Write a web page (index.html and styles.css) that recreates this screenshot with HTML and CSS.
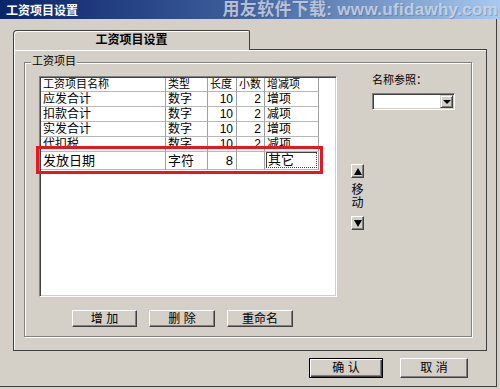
FILE: index.html
```html
<!DOCTYPE html>
<html lang="zh-CN">
<head>
  <meta charset="UTF-8" />
  <title>工资项目设置</title>
  <link rel="stylesheet" href="styles.css">
</head>
<body>
<div class="window">

  <!-- Title bar -->
  <div class="titlebar">
    <span class="title">工资项目设置</span>
    <span class="watermark">用友软件下载: www.ufidawhy.com</span>
  </div>

  <div class="client">
    <div class="tabstrip">
      <div class="tab">工资项目设置</div>
    </div>

    <div class="tabpage">
      <div class="group">
        <span class="caption">工资项目</span>

        <div class="group-body">
          <!-- Item list -->
          <div class="list">
            <table class="grid">
              <thead>
                <tr>
                  <th class="c-name">工资项目名称</th>
                  <th class="c-type">类型</th>
                  <th class="c-len">长度</th>
                  <th class="c-dec">小数</th>
                  <th class="c-sign">增减项</th>
                </tr>
              </thead>
              <tbody>
                <tr><td>应发合计</td><td>数字</td><td class="num">10</td><td class="num">2</td><td>增项</td></tr>
                <tr><td>扣款合计</td><td>数字</td><td class="num">10</td><td class="num">2</td><td>减项</td></tr>
                <tr><td>实发合计</td><td>数字</td><td class="num">10</td><td class="num">2</td><td>增项</td></tr>
                <tr><td>代扣税</td><td>数字</td><td class="num">10</td><td class="num">2</td><td>减项</td></tr>
                <tr class="editing"><td>发放日期</td><td>字符</td><td class="num">8</td><td class="num"></td><td><span class="editor">其它</span></td></tr>
              </tbody>
            </table>
            <div class="mark"></div>
          </div>

          <!-- Move up / down -->
          <div class="mover">
            <button class="arrow"><span class="tri-up"></span></button>
            <span class="mover-label">移<br>动</span>
            <button class="arrow"><span class="tri-down big"></span></button>
          </div>

          <!-- Name reference -->
          <div class="ref">
            <label class="ref-label">名称参照：</label>
            <div class="combo">
              <span class="combo-btn"><span class="tri-down"></span></span>
            </div>
          </div>
        </div>

        <div class="actions">
          <button class="btn btn-add">增 加</button>
          <button class="btn btn-del">删 除</button>
          <button class="btn btn-ren">重命名</button>
        </div>
      </div>
    </div>

    <div class="footer">
      <button class="btn btn-ok">确 认</button>
      <button class="btn btn-cancel">取 消</button>
    </div>
  </div>

</div>
</body>
</html>
```

FILE: styles.css
```css
/* Reset and base styling */
* {
  margin: 0;
  padding: 0;
  box-sizing: border-box;
}

body {
  width: 500px;
  height: 389px;
  overflow: hidden;
  background: #d4d0c8;
  color: #000;
  font-family: "Liberation Sans", "Noto Sans CJK SC", sans-serif;
  font-size: 12px;
}

.window {
  width: 500px;
  height: 389px;
}

/* Title bar */
.titlebar {
  height: 19px;
  display: flex;
  justify-content: space-between;
  padding: 0 2px 0 6px;
  background: linear-gradient(to right, #0a246a 0%, #3a5a98 45%, #a6caf0 100%);
  overflow: hidden;
}

.title {
  align-self: flex-end;
  padding-bottom: 1px;
  line-height: 14px;
  color: #fff;
  font-weight: bold;
  font-size: 12px;
}

.watermark {
  line-height: 19px;
  color: rgba(214, 220, 232, 0.78);
  font-weight: bold;
  font-size: 17px;
  letter-spacing: 0.3px;
  white-space: nowrap;
  text-shadow: 1px 1px 0 rgba(60, 70, 100, 0.3);
}

/* Dialog body */
.client {
  width: 497px;
  height: 368px;
  padding: 11px 0 0 13px;
  border-right: 1px solid #404040;
  border-bottom: 1px solid #404040;
}

/* Tab */
.tabstrip {
  display: flex;
}

.tab {
  position: relative;
  z-index: 1;
  width: 237px;
  height: 20px;
  margin-bottom: -1px;
  background: #d4d0c8;
  border: 1px solid #404040;
  border-bottom: none;
  border-radius: 4px 2px 0 0;
  box-shadow: inset 1px 1px 0 #fff;
  text-align: center;
  line-height: 18px;
  font-weight: bold;
  font-size: 12px;
}

.tabpage {
  width: 474px;
  height: 302px;
  padding: 12px 0 0 10px;
  border: 1px solid #404040;
  box-shadow: inset 1px 1px 0 #fff;
}

/* Group box */
.group {
  position: relative;
  width: 448px;
  height: 275px;
  padding-left: 14px;
  border: 1px solid #808080;
  box-shadow: inset 1px 1px 0 #fff, 1px 1px 0 #fff;
}

.caption {
  position: absolute;
  top: -8px;
  left: 6px;
  padding: 0 1px;
  background: #d4d0c8;
  line-height: 12px;
  font-size: 11px;
}

.group-body {
  display: flex;
  align-items: flex-start;
}

/* List */
.list {
  position: relative;
  width: 298px;
  height: 221px;
  margin-top: 13px;
  padding: 1px;
  background: #fff;
  border: 1px solid;
  border-color: #808080 #fff #fff #808080;
  box-shadow: inset 1px 1px 0 #404040, inset -1px -1px 0 #d4d0c8;
}

.grid {
  width: 278px;
  table-layout: fixed;
  border-collapse: separate;
  border-spacing: 0;
}

.grid th,
.grid td {
  padding: 0 3px 0 2px;
  border-right: 1px solid #a0a0a0;
  border-bottom: 1px solid #b8b8b8;
  text-align: left;
  white-space: nowrap;
  overflow: hidden;
  vertical-align: top;
}

.grid th {
  line-height: 13px;
  font-weight: normal;
  font-size: 11px;
}

.grid td {
  line-height: 14px;
  font-size: 12px;
}

.grid .c-name { width: 125px; }
.grid .c-type { width: 42px; }
.grid .c-len  { width: 29px; }
.grid .c-dec  { width: 28px; }
.grid .c-sign { width: 54px; }

.grid td.num {
  text-align: right;
}

.grid tr.editing td {
  line-height: 17px;
  font-size: 13px;
}

.grid tr.editing td:last-child {
  padding: 0 1px 1px 1px;
}

.editor {
  display: block;
  height: 16px;
  line-height: 14px;
  padding-left: 1px;
  border: 1px dotted #404040;
  border-left-style: solid;
  border-top-style: solid;
}

/* Red highlight frame */
.mark {
  position: absolute;
  top: 69px;
  left: -4px;
  width: 287px;
  height: 28px;
  border: 3px solid #e8161e;
}

/* Move buttons */
.mover {
  width: 13px;
  margin: 101px 0 0 14px;
  display: flex;
  flex-direction: column;
  align-items: center;
}

.arrow {
  width: 13px;
  height: 14px;
  display: flex;
  align-items: center;
  justify-content: center;
  background: #d4d0c8;
  border: 1px solid;
  border-color: #fff #404040 #404040 #fff;
  box-shadow: inset -1px -1px 0 #808080;
}

.mover-label {
  margin: 6px 0 6px;
  line-height: 13px;
  font-size: 12px;
}

.tri-up,
.tri-down {
  width: 0;
  height: 0;
  border-left: 4px solid transparent;
  border-right: 4px solid transparent;
}

.tri-up {
  border-bottom: 7px solid #000;
}

.tri-down {
  border-top: 4px solid #000;
}

.tri-down.big {
  border-top-width: 7px;
}

/* Name reference combo */
.ref {
  margin: 10px 0 0 8px;
}

.ref-label {
  display: block;
  line-height: 14px;
  font-size: 11px;
}

.combo {
  width: 83px;
  height: 17px;
  margin-top: 6px;
  padding: 1px;
  display: flex;
  justify-content: flex-end;
  background: #fff;
  border: 1px solid;
  border-color: #808080 #fff #fff #808080;
  box-shadow: inset 1px 1px 0 #404040, inset -1px -1px 0 #d4d0c8;
}

.combo-btn {
  width: 13px;
  height: 13px;
  display: flex;
  align-items: center;
  justify-content: center;
  background: #d4d0c8;
  border: 1px solid;
  border-color: #d4d0c8 #404040 #404040 #d4d0c8;
  box-shadow: inset 1px 1px 0 #fff, inset -1px -1px 0 #808080;
}

/* Buttons */
.btn {
  height: 17px;
  background: #d4d0c8;
  border: 1px solid;
  border-color: #fff #404040 #404040 #fff;
  box-shadow: inset -1px -1px 0 #808080;
  font-family: "Liberation Sans", "Noto Sans CJK SC", sans-serif;
  font-size: 12px;
  line-height: 14px;
  color: #000;
}

.actions {
  display: flex;
  gap: 12px;
  margin-top: 13px;
  padding-left: 33px;
}

.btn-add { width: 65px; }
.btn-del { width: 66px; }
.btn-ren { width: 66px; }

.footer {
  width: 474px;
  display: flex;
  justify-content: flex-end;
  gap: 17px;
  margin-top: 7px;
  padding-right: 19px;
}

.footer .btn {
  height: 20px;
}

.btn-ok {
  width: 74px;
  border: 1px solid #000;
  box-shadow: inset 1px 1px 0 #fff, inset -1px -1px 0 #404040, inset -2px -2px 0 #808080;
}

.btn-cancel {
  width: 68px;
}
```
